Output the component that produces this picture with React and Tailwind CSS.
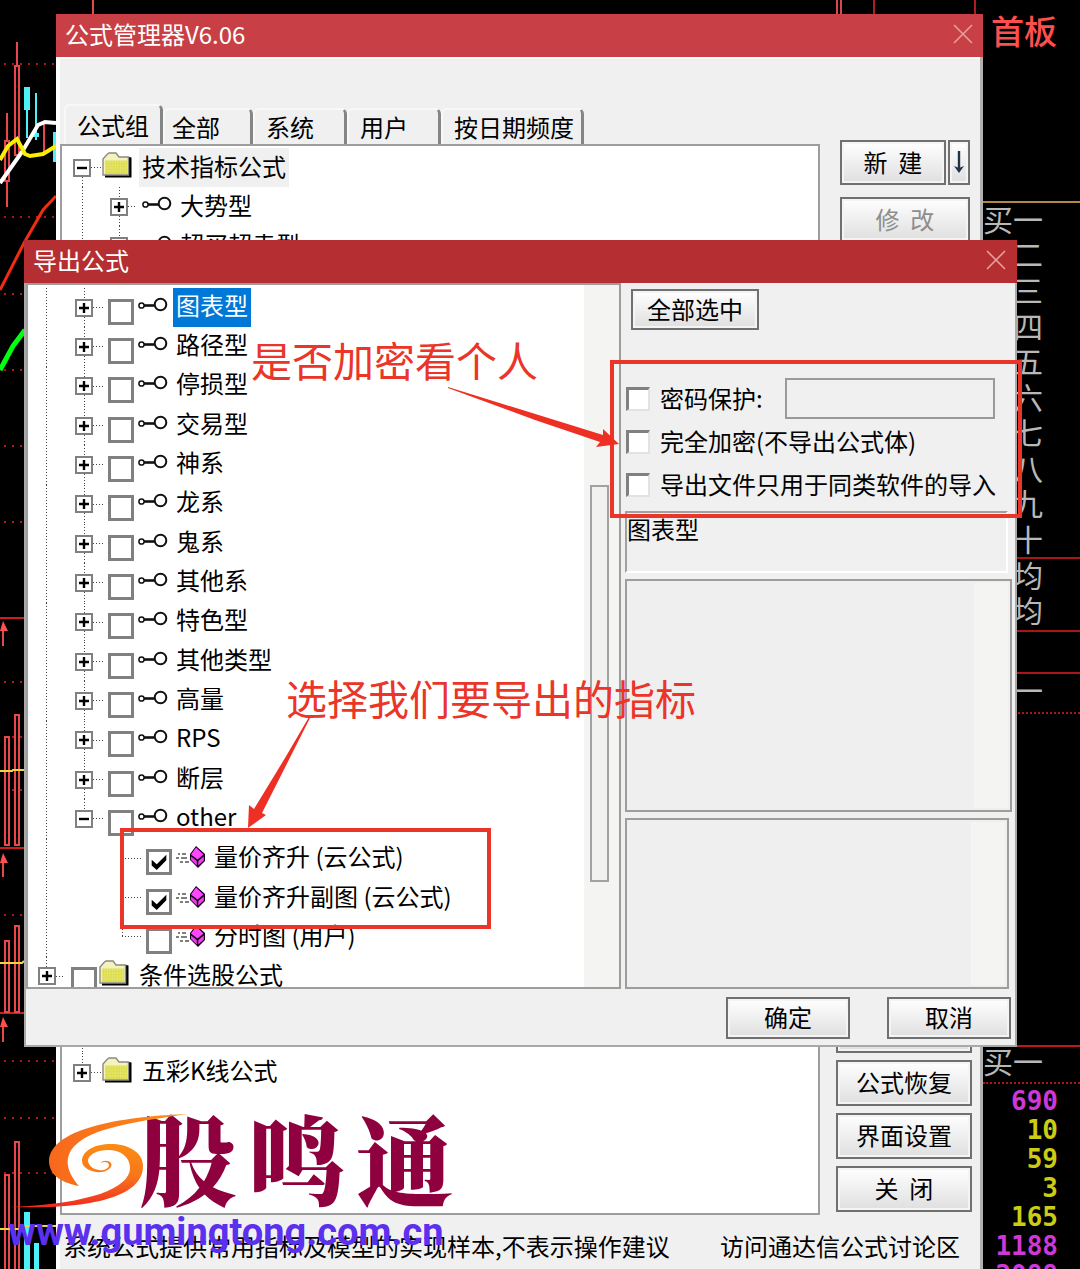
import React from "react";

const V_DOTS =
  "w-px h-full bg-[repeating-linear-gradient(180deg,#444_0_1px,transparent_1px_3px)]";
const H_DOTS =
  "h-px bg-[repeating-linear-gradient(90deg,#444_0_1px,transparent_1px_3px)]";
const BUTTON =
  "border-2 border-[#707070] bg-linear-to-b from-white to-[#dfdfdf] pb-0.5 text-2xl leading-6 text-black shadow-[inset_0_0_0_2px_#f4f4f4]";

function Toggle({ open, name }) {
  return (
    <button
      aria-label={(open ? "收起 " : "展开 ") + name}
      className="relative col-start-1 row-start-1 size-[18px] border-2 border-[#808080] bg-white"
    >
      <svg viewBox="0 0 14 14" className="block size-[14px]">
        <path
          d={open ? "M2 7H12" : "M2 7H12M7 2V12"}
          stroke="#000"
          strokeWidth="2.4"
        />
      </svg>
    </button>
  );
}

function Branch({ open, name, top = true, bottom = true, leaf = false, className }) {
  return (
    <span className={"grid h-full shrink-0 place-items-center " + className}>
      <span className="col-start-1 row-start-1 flex h-full w-px flex-col">
        <span className="flex-1">{top && <span className={"block " + V_DOTS} />}</span>
        <span className="flex-1">{bottom && <span className={"block " + V_DOTS} />}</span>
      </span>
      <span className={"col-start-1 row-start-1 w-1/2 justify-self-end " + H_DOTS} />
      {!leaf && <Toggle open={open} name={name} />}
    </span>
  );
}

function TreeCheck({ id, checked }) {
  return (
    <span className="mt-2 grid size-[26px] shrink-0 place-items-center">
      <input
        id={id}
        type="checkbox"
        defaultChecked={checked}
        className="peer col-start-1 row-start-1 size-[26px] appearance-none border-[3px] border-[#808080] bg-white"
      />
      <svg
        viewBox="0 0 16 16"
        className="pointer-events-none invisible col-start-1 row-start-1 size-[18px] peer-checked:visible"
      >
        <path d="M1.500 6 L6 10 L14.500 1.500 V6.500 L6 15 L1.500 11 Z" fill="#000" />
      </svg>
    </span>
  );
}

function KeyIcon() {
  return (
    <svg viewBox="0 0 30 16" className="mb-1.5 h-4 w-[30px] shrink-0" fill="none" stroke="#111">
      <circle cx="3.5" cy="8.5" r="2.6" strokeWidth="1.5" />
      <path d="M6 8.5H16" strokeWidth="2.6" />
      <circle cx="22.5" cy="7.5" r="5.8" strokeWidth="2" />
    </svg>
  );
}

function FolderIcon() {
  return (
    <svg viewBox="0 0 30 26" className="mb-1.5 h-[26px] w-[30px] shrink-0">
      <path d="M3 25.5H29.5V5.5L27 5V23H3Z" fill="#000" />
      <path d="M1 23V7L5 2.500L7 1H14L17 5H26.5V23Z" fill="#f4f3c0" stroke="#8a8a80" strokeWidth="1.4" />
      <path d="M3 8.5H25V22H3Z" fill="#dede52" />
      <path d="M3 10H25M3 13H25M3 16H25M3 19H25" stroke="#f0f09a" strokeWidth="1" strokeDasharray="1 1.5" />
    </svg>
  );
}

function CubeIcon() {
  return (
    <svg viewBox="0 0 30 24" className="mb-0.5 h-6 w-[30px] shrink-0">
      <path d="M2 9H4M6 9H10M0 13H3M5 13H11M4 17H7M9 17H13" stroke="#555" strokeWidth="1.4" />
      <path d="M20 1L29 9V16L22 23L14 15V9Z" fill="#16001a" />
      <path d="M20 2.500L27.500 9.500L21.500 14.500L15 9.500Z" fill="#ff46ff" />
      <path d="M15 11.500L20.800 16V20.500L15 15Z" fill="#ee38ee" />
      <path d="M22.300 16L27.800 11.500V15.500L22.300 20.500Z" fill="#f040f0" />
    </svg>
  );
}

function CloseIcon() {
  return (
    <svg viewBox="0 0 20 20" className="size-5" stroke="#e5a09c" strokeWidth="1.6">
      <path d="M1 1L19 19M19 1L1 19" />
    </svg>
  );
}

const GROUPS = [
  "图表型", "路径型", "停损型", "交易型", "神系", "龙系", "鬼系",
  "其他系", "特色型", "其他类型", "高量", "RPS", "断层", "other",
];

const FORMULAS = [
  { name: "量价齐升 (云公式)", checked: true },
  { name: "量价齐升副图 (云公式)", checked: true },
  { name: "分时图 (用户)", checked: false },
];

function ExportTree() {
  return (
    <ul className="flex h-[708px] min-w-0 flex-1 flex-col text-2xl leading-6">
      {GROUPS.map((name, i) => (
        <li key={name} className="flex min-h-0 flex-1 items-center">
          <span className="flex h-full w-[37px] shrink-0 justify-center">
            <span className={V_DOTS} />
          </span>
          <Branch name={name} open={name === "other"} bottom={name !== "other"} className="w-[38px]" />
          <span className="w-[5px]" />
          <TreeCheck id={"group-" + i} />
          <span className="w-1" />
          <KeyIcon />
          <label
            htmlFor={"group-" + i}
            className={
              i === 0
                ? "ml-[5px] flex h-full items-center bg-[#0078d7] px-[3px] pb-1.5 text-white"
                : "ml-[5px] flex h-full items-center px-[3px] pb-1.5"
            }
          >
            {name}
          </label>
        </li>
      ))}
      {FORMULAS.map((f, i) => (
        <li key={f.name} className="flex min-h-0 flex-1 items-center">
          <span className="flex h-full w-[37px] shrink-0 justify-center">
            <span className={V_DOTS} />
          </span>
          <span className="w-[38px] shrink-0" />
          <Branch leaf name={f.name} bottom={i < 2} className="w-[38px]" />
          <span className="w-[5px]" />
          <TreeCheck id={"formula-" + i} checked={f.checked} />
          <span className="w-1" />
          <CubeIcon />
          <label htmlFor={"formula-" + i} className="ml-[5px] flex h-full items-center px-[3px] pb-1">
            {f.name}
          </label>
        </li>
      ))}
      <li className="flex min-h-0 flex-1 items-center">
        <Branch name="条件选股公式" bottom={false} className="w-[37px]" />
        <span className="w-1.5" />
        <TreeCheck id="group-conditions" />
        <span className="w-0.5" />
        <FolderIcon />
        <label htmlFor="group-conditions" className="ml-[7px] flex h-full items-center px-[3px] pb-1">
          条件选股公式
        </label>
      </li>
    </ul>
  );
}

function Option({ id, label, children }) {
  return (
    <div className="flex h-[41px] items-center">
      <input
        id={id}
        type="checkbox"
        className="size-6 appearance-none border-t-[3px] border-r-2 border-b-2 border-l-[3px] border-t-[#808080] border-r-[#e2e2e2] border-b-[#e2e2e2] border-l-[#808080] bg-white checked:bg-[#555]"
      />
      <label htmlFor={id} className="ml-2.5 pb-px text-2xl leading-6 whitespace-nowrap">
        {label}
      </label>
      {children}
    </div>
  );
}

function ExportDialog() {
  return (
    <section
      aria-label="导出公式"
      className="absolute top-[240px] right-[63px] left-6 border-x-2 border-b-2 border-[#a9a9a9] bg-[#f0f0f0]"
    >
      <header className="-mx-0.5 flex h-[43px] items-center justify-between bg-[#b52f32] pr-[11px] pb-1 pl-[9px] text-white">
        <h2 className="text-2xl leading-6">导出公式</h2>
        <button aria-label="关闭导出公式">
          <CloseIcon />
        </button>
      </header>
      <div className="flex h-[706px]">
        <div className="flex min-w-0 flex-1 overflow-hidden border-2 border-[#9d9d9d] bg-white">
          <div className="flex min-w-0 flex-1 pt-[3px]">
            <ExportTree />
          </div>
          <div className="w-[35px] shrink-0 bg-[#f4f4f2] pt-[200px] pl-1.5">
            <div className="h-[397px] w-[19px] border-2 border-[#a2a2a2] bg-[#f1f1ef]" />
          </div>
        </div>
        <div className="flex w-[394px] shrink-0 flex-col pr-[3px] pl-1">
          <button className={"mt-1.5 ml-1.5 h-[41px] w-32 self-start " + BUTTON}>全部选中</button>
          <div className="mt-12 flex flex-col gap-0.5 pl-px">
            <Option id="opt-password" label="密码保护:">
              <input
                aria-label="密码"
                type="text"
                className="mr-[17px] ml-auto h-[41px] w-[210px] border-2 border-[#9a9a9a] bg-[#f0f0f0] px-2 text-2xl"
              />
            </Option>
            <Option id="opt-encrypt" label="完全加密(不导出公式体)" />
            <Option id="opt-same" label="导出文件只用于同类软件的导入" />
          </div>
          <div className="mt-1.5 mr-1 h-[62px] border-2 border-[#a0a0a0] border-r-white border-b-white pt-1 text-2xl leading-6">
            图表型
          </div>
          <div className="mt-1.5 flex h-[233px] justify-end border-2 border-[#9d9d9d] bg-[#efefef] p-0.5">
            <div className="w-[34px] bg-[#f4f4f2]" />
          </div>
          <div className="mt-1.5 mr-[3px] flex min-h-0 flex-1 justify-end border-2 border-[#9d9d9d] bg-[#efefef] p-0.5">
            <div className="w-[34px] bg-[#f4f4f2]" />
          </div>
        </div>
      </div>
      <footer className="flex justify-end gap-[37px] pt-2 pr-1 pb-1.5">
        <button className={"h-[42px] w-[124px] " + BUTTON}>确定</button>
        <button className={"h-[42px] w-[124px] " + BUTTON}>取消</button>
      </footer>
    </section>
  );
}

const TABS = [
  { name: "全部", size: "w-[90px] pl-[7px]" },
  { name: "系统", size: "w-[94px] pl-[11px]" },
  { name: "用户", size: "w-[94px] pl-[11px]" },
  { name: "按日期频度", size: "w-[143px] pl-[11px]" },
];

function ManagerWindow() {
  return (
    <section
      aria-label="公式管理器"
      className="absolute top-3.5 right-[97px] bottom-0 left-14 flex flex-col border-r-[3px] border-l-4 border-r-[#b0b0b0] border-l-white bg-[#f0f0f0]"
    >
      <header className="-mr-[3px] -ml-1 flex h-[43px] shrink-0 items-center justify-between bg-[#c84046] pr-2.5 pb-1 pl-[9px] text-white">
        <h1 className="text-2xl leading-6">公式管理器V6.06</h1>
        <button aria-label="关闭">
          <CloseIcon />
        </button>
      </header>
      <div className="flex min-h-0 flex-1 border-t-2 border-white pt-[45px]">
        <div className="flex min-w-0 flex-1 flex-col">
          <nav className="flex h-10 shrink-0 items-end pl-1 text-2xl leading-6">
            <button className="h-10 w-[99px] rounded-t-md border-t-2 border-r-[3px] border-l-2 border-t-[#f8f8f8] border-r-[#858585] border-l-[#f8f8f8]">
              公式组
            </button>
            {TABS.map((t) => (
              <button
                key={t.name}
                className={
                  "h-9 rounded-t-md border-t-2 border-r-[3px] border-l-2 border-t-[#f8f8f8] border-r-[#858585] border-l-[#f8f8f8] text-left " +
                  t.size
                }
              >
                {t.name}
              </button>
            ))}
          </nav>
          <ul className="flex min-h-0 flex-1 flex-col border-2 border-[#9d9d9d] bg-white pt-0.5 text-2xl leading-6">
            <li className="flex h-[39px] shrink-0 items-center">
              <Branch open name="技术指标公式" top={false} className="w-10" />
              <FolderIcon />
              <span className="ml-[7px] flex h-full items-center bg-[#f0f0f0] px-[3px] pb-1">技术指标公式</span>
            </li>
            {["大势型", "超买超卖型"].map((name) => (
              <li key={name} className="flex h-[39px] shrink-0 items-center">
                <span className="flex h-full w-10 justify-center">
                  <span className={V_DOTS} />
                </span>
                <Branch name={name} className="w-[34px]" />
                <span className="w-1.5" />
                <KeyIcon />
                <span className="ml-2 pb-1">{name}</span>
              </li>
            ))}
            <li aria-hidden="true" className="flex w-10 flex-1 justify-center">
              <span className={V_DOTS} />
            </li>
            <li className="mb-[121px] flex h-[39px] shrink-0 items-center">
              <Branch name="五彩K线公式" bottom={false} className="w-10" />
              <FolderIcon />
              <span className="ml-[10px] pb-1.5">五彩K线公式</span>
            </li>
          </ul>
        </div>
        <div className="flex w-40 shrink-0 flex-col justify-between pt-9 pb-[3px] pl-4">
          <div className="ml-1 flex w-[130px] flex-col gap-3 self-start">
            <div className="flex gap-0.5">
              <button className={"h-[45px] flex-1 whitespace-pre " + BUTTON}>新  建</button>
              <button aria-label="更多新建选项" className={"grid h-[45px] w-[22px] place-items-center " + BUTTON}>
                <svg viewBox="0 0 10 24" className="h-6 w-2.5">
                  <path d="M5 1V20" stroke="#234" strokeWidth="2.4" />
                  <path d="M0 16L5 18L10 16L5 23Z" fill="#234" />
                </svg>
              </button>
            </div>
            <button disabled className={"h-[45px] whitespace-pre " + BUTTON}>
              <span className="text-[#8d8d8d]">修  改</span>
            </button>
          </div>
          <div className="flex w-[136px] flex-col gap-[7px]">
            <button className={"h-[46px] " + BUTTON}>公式备份</button>
            <button className={"h-[46px] " + BUTTON}>公式恢复</button>
            <button className={"h-[46px] " + BUTTON}>界面设置</button>
            <button className={"h-[46px] whitespace-pre " + BUTTON}>关  闭</button>
          </div>
        </div>
      </div>
      <footer className="flex h-[54px] shrink-0 items-center justify-between pt-2 pr-5 pl-[3px] text-2xl leading-6 whitespace-nowrap">
        <span>系统公式提供常用指标及模型的实现样本,不表示操作建议</span>
        <a href="#forum">访问通达信公式讨论区</a>
      </footer>
    </section>
  );
}

function CandleChart() {
  return (
    <svg viewBox="0 0 100 1269" className="absolute top-0 left-0 h-[1269px] w-[100px]" fill="none">
      <path
        d="M4 64H56M4 217H56M4 294H24M4 370H24M4 446H24M4 522H24M4 682H24M4 737H24M4 790H24M4 915H24M4 1061H56M4 1118H56M4 1173H56"
        stroke="#b01818"
        strokeWidth="2"
        strokeDasharray="2 6"
      />
      <path d="M0 618H24M0 848H24M0 1013H24" stroke="#d01c1c" strokeWidth="2" />
      <g stroke="#e8484c" strokeWidth="2">
        <path d="M93 0V14M7 113V141M7 181V207M17 42V66M44 123V155M3 628V646M3 860V877M3 1024V1042" />
        <path d="M5 141H9V181H5ZM15 66H19V155H15ZM5 737H9V845H5ZM15 715H19V845H15ZM5 941H9V1012H5ZM15 926H19V1012H15ZM5 1175H9V1272H5ZM15 1142H19V1272H15Z" />
      </g>
      <path d="M0 631L3 621L8 631ZM0 863L3 853L8 863ZM0 1027L3 1017L8 1027Z" fill="#ff5050" />
      <path
        d="M24 87H30V110H24ZM26 110H28V138H26ZM35 93H37V140H35ZM33 133H39V137H33ZM53 132H56V162H53ZM24 1212H30V1269H24ZM34 1243H39V1269H34Z"
        fill="#4df0f8"
      />
      <path d="M0 183L22 152L38 125L45 122L56 123" stroke="#fff" strokeWidth="4" />
      <path d="M0 160L8 146L17 139L25 154L30 156L43 154L56 146" stroke="#f8f000" strokeWidth="4" />
      <path d="M0 771H12L13 770H24M0 963H22L24 961M0 1229H24L26 1226H56" stroke="#f0d83c" strokeWidth="2" />
      <path d="M0 290L24 243L43 210L56 196" stroke="#f22c10" strokeWidth="3" />
      <path d="M0 370L13 346L25 330" stroke="#00ff10" strokeWidth="5" />
    </svg>
  );
}

const LEVELS = ["买一", "二", "三", "四", "五", "六", "七", "八", "九", "十", "均", "均"];

const TRADES = [
  { n: "690", c: "text-[#cf38d6]" },
  { n: "10", c: "text-[#cccc12]" },
  { n: "59", c: "text-[#cccc12]" },
  { n: "3", c: "text-[#cccc12]" },
  { n: "165", c: "text-[#cccc12]" },
  { n: "1188", c: "text-[#cf38d6]" },
  { n: "2088", c: "text-[#cf38d6]" },
];

function QuotePanel() {
  return (
    <aside className="absolute top-0 right-0 w-[97px] text-[#b8b8b8]">
      <h2 className="flex h-[201px] pt-3.5 pl-2 text-[33px] leading-8 font-medium text-[#ff4e4e]">首板</h2>
      <svg viewBox="0 0 97 4" className="absolute top-[556px] left-0 h-1 w-full">
        <path d="M0 2H97" stroke="#a81616" strokeWidth="2" />
      </svg>
      <div className="flex h-[429px] flex-col border-t-2 border-[#b08a3c] pr-[37px] text-[30px] leading-8">
        {LEVELS.map((l, i) => (
          <span key={i} className="flex min-h-0 flex-1 items-center justify-end pb-1.5">
            {l}
          </span>
        ))}
      </div>
      <div className="h-[44px] border-y-2 border-[#a81616]" />
      <div className="flex h-[40px] items-center justify-end border-b-2 border-dotted border-[#a81616] pr-[37px] pb-2 text-[30px] leading-8">
        一
      </div>
      <div className="mt-[331px] flex h-[39px] items-center justify-end border-t-2 border-b-2 border-t-[#c01818] border-b-[#a81616] pr-[37px] pb-2.5 text-[30px] leading-8 [border-bottom-style:dotted]">
        买一
      </div>
      <ul className="flex h-[206px] flex-col pt-0.5 pr-[22px] text-right font-['DejaVu_Sans_Mono',monospace] text-[26px] leading-7 font-bold">
        {TRADES.map((t) => (
          <li key={t.n} className={"flex min-h-0 flex-1 items-center justify-end " + t.c}>
            {t.n}
          </li>
        ))}
      </ul>
    </aside>
  );
}

function TopTicks() {
  return (
    <svg viewBox="0 0 150 14" className="absolute top-0 right-[97px] h-3.5 w-[150px]" strokeWidth="2">
      <path d="M4 0V14M8 0V14" stroke="#d8484c" />
      <path d="M41 0V14M142 0V14" stroke="#b01c20" />
    </svg>
  );
}

function Watermark() {
  return (
    <div className="pointer-events-none absolute top-[1110px] left-0 w-[460px]">
      <svg viewBox="0 1110 200 100" className="absolute top-0 left-0 h-[100px] w-[200px]">
        <defs>
          <linearGradient id="swirl" x1="0" y1="1144" x2="0" y2="1208" gradientUnits="userSpaceOnUse">
            <stop offset="0" stopColor="#fb8c14" />
            <stop offset="0.5" stopColor="#f9761a" />
            <stop offset="1" stopColor="#ee2a20" />
          </linearGradient>
          <linearGradient id="crest" x1="50" y1="0" x2="188" y2="0" gradientUnits="userSpaceOnUse">
            <stop offset="0" stopColor="#f8681c" />
            <stop offset="1" stopColor="#f99018" />
          </linearGradient>
        </defs>
        <path
          d="M188 1114C132 1116 49 1126 49 1162C50 1177 64 1183 79 1186C66 1171 62 1155 79 1142C98 1127 140 1121 188 1114Z"
          fill="url(#crest)"
        />
        <path
          d="M10 1207C70 1209 143 1203 143 1166C143 1150 124 1143 108 1144C92 1145 82 1152 82 1161C82 1168 92 1173 102 1172C109 1171 113 1166 111 1163C109 1160 102 1160 101 1163C104 1161 109 1162 109 1165C109 1169 103 1171 99 1170C92 1169 88 1165 88 1160C89 1154 98 1150 108 1150C121 1150 130 1157 130 1168C130 1188 90 1204 10 1207Z"
          fill="url(#swirl)"
        />
      </svg>
      <div className="flex h-[92px] items-center justify-between pr-1.5 pl-[139px] font-['Noto_Serif_CJK_SC','Noto_Sans_CJK_SC',serif] text-[98px] leading-[92px] font-black text-[#8f003e]">
        <span>股</span>
        <span>鸣</span>
        <span>通</span>
      </div>
      <a
        href="#site"
        className="flex h-[60px] items-center pl-2 font-['Roboto','Liberation_Sans',sans-serif] text-[38px] leading-10 font-bold text-[#5b30ee]"
      >
        www.gumingtong.com.cn
      </a>
    </div>
  );
}

function Annotations() {
  return (
    <div className="pointer-events-none">
      <p className="absolute top-[335px] left-[251px] text-[41px] leading-[48px] whitespace-nowrap text-[#ea3528]">
        是否加密看个人
      </p>
      <p className="absolute top-[673px] left-[286px] text-[41px] leading-[48px] whitespace-nowrap text-[#ea3528]">
        选择我们要导出的指标
      </p>
      <div className="absolute top-[360px] left-[610px] h-[158px] w-[412px] border-4 border-[#ea3528]" />
      <div className="absolute top-[828px] left-[120px] h-[101px] w-[371px] border-4 border-[#ea3528]" />
      <svg viewBox="0 0 180 65" className="absolute top-[385px] left-[445px] h-[65px] w-[180px]">
        <path d="M3 2L158 50V44L174 59L151 62L155 57L90 35L3 3Z" fill="#ee3024" />
      </svg>
      <svg viewBox="0 0 70 120" className="absolute top-[713px] left-[245px] h-[120px] w-[70px]">
        <path d="M64 4L65 5L17 100L21 102L3 115L4 92L9 96L40 45Z" fill="#ee3024" />
      </svg>
    </div>
  );
}

export default function App() {
  return (
    <main className="relative min-h-screen overflow-hidden bg-black font-['Noto_Sans_CJK_SC',sans-serif] text-black">
      <CandleChart />
      <TopTicks />
      <QuotePanel />
      <ManagerWindow />
      <ExportDialog />
      <Watermark />
      <Annotations />
    </main>
  );
}
